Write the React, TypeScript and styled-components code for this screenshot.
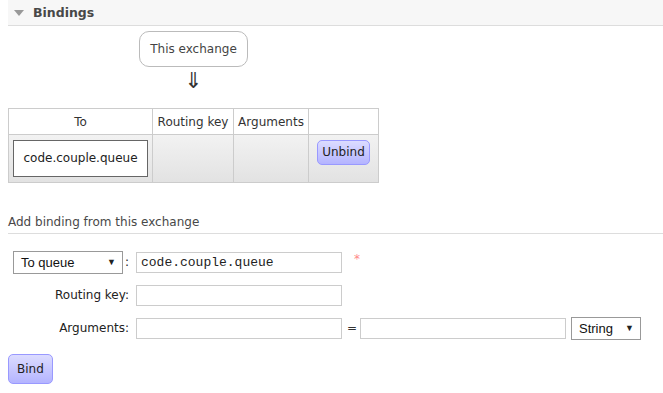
import React from "react";
import styled, { createGlobalStyle } from "styled-components";

const GlobalStyle = createGlobalStyle`
  body {
    margin: 0;
    background: #fff;
    font-family: "DejaVu Sans", Verdana, sans-serif;
    font-size: 12px;
    color: #333;
  }
`;

const Page = styled.div`
  padding: 0 0 0 8px;
`;

const SectionHeader = styled.h2`
  display: flex;
  align-items: center;
  gap: 9px;
  height: 25px;
  margin: 0;
  padding: 0 0 0 6px;
  background: #f7f7f7;
  border-bottom: 1px solid #ddd;
  font-size: 12.5px;
  font-weight: bold;
  color: #484848;
`;

const Triangle = styled.span`
  width: 0;
  height: 0;
  border-left: 5px solid transparent;
  border-right: 5px solid transparent;
  border-top: 6px solid #999;
  margin-top: 1px;
`;

const Body = styled.div`
  padding-top: 5px;
`;

const BindingsWrapper = styled.div`
  display: inline-block;
  text-align: center;
`;

const ExchangeBox = styled.div`
  display: inline-block;
  padding: 10px 10px;
  border: 1px solid #bbb;
  border-radius: 10px;
  color: #444;
  line-height: 14px;
`;

const Arrow = styled.div`
  font-size: 22px;
  line-height: 22px;
  margin: 3px 0 16px;
  color: #333;
`;

const Table = styled.table`
  border-collapse: collapse;
  border: 1px solid #ccc;
`;

const Th = styled.th<{ $w: number }>`
  width: ${(p) => p.$w}px;
  box-sizing: border-box;
  height: 26px;
  padding: 0 4px;
  border: 1px solid #ccc;
  font-weight: normal;
  color: #333;
  background: #fff;
`;

const Row = styled.tr`
  background: linear-gradient(#f2f2f2, #e2e2e2);
`;

const Td = styled.td`
  height: 48px;
  padding: 5px 4px;
  box-sizing: border-box;
  border: 1px solid #ccc;
  vertical-align: top;
  text-align: center;
`;

const QueueBox = styled.div`
  display: block;
  padding: 11px 9px;
  border: 1px solid #666;
  background: #fff;
  line-height: 13px;
  color: #222;
  white-space: nowrap;
`;

const Button = styled.button<{ $big?: boolean }>`
  font-family: "DejaVu Sans", Verdana, sans-serif;
  font-size: 12px;
  color: #222;
  border: 1px solid #99f;
  border-radius: 5px;
  background: linear-gradient(#dcdcff, #b4b4ff);
  padding: ${(p) => (p.$big ? "7px 8px" : "5px 4px")};
  line-height: ${(p) => (p.$big ? "14px" : "13px")};
  cursor: pointer;
`;

const SubHeader = styled.h3`
  margin: 32px 0 0;
  padding-bottom: 4px;
  border-bottom: 1px solid #ddd;
  font-size: 12px;
  font-weight: normal;
  color: #484848;
`;

const Form = styled.div`
  display: flex;
  flex-direction: column;
  gap: 11px;
  padding: 17px 0 0 5px;
`;

const FormRow = styled.div`
  display: flex;
  align-items: center;
  gap: 5px;
  height: 22px;
`;

const Label = styled.div`
  width: 116px;
  flex-shrink: 0;
  margin-right: 2px;
  display: flex;
  justify-content: flex-end;
  align-items: center;
  gap: 2px;
  color: #222;
`;

const Input = styled.input<{ $mono?: boolean }>`
  width: 206px;
  height: 21px;
  flex-shrink: 0;
  box-sizing: border-box;
  border: 1px solid #ccc;
  padding: 0 4px;
  font-family: ${(p) => (p.$mono ? '"Liberation Mono", monospace' : '"DejaVu Sans", sans-serif')};
  font-size: 13px;
  color: #222;
  outline: none;
`;

const SelectBox = styled.div<{ $w: number }>`
  width: ${(p) => p.$w}px;
  height: 23px;
  flex-shrink: 0;
  box-sizing: border-box;
  border: 1px solid #999;
  background: #fff;
  display: flex;
  align-items: center;
  justify-content: space-between;
  padding: 0 6px 0 7px;
  font-family: "Liberation Sans", Arial, sans-serif;
  font-size: 13px;
  color: #111;
`;

const Caret = styled.span`
  font-size: 9px;
  color: #222;
`;

const Required = styled.span`
  color: #f88;
  font-size: 12px;
  margin: -6px 0 0 7px;
`;

const Eq = styled.span`
  width: 8px;
  text-align: center;
  color: #333;
`;

const BindRow = styled.div`
  padding-top: 4px;
  margin-left: -5px;
`;

export default function App() {
  return (
    <Page>
      <GlobalStyle />
      <SectionHeader>
        <Triangle />
        Bindings
      </SectionHeader>
      <Body>
        <BindingsWrapper>
          <ExchangeBox>This exchange</ExchangeBox>
          <Arrow>⇓</Arrow>
          <Table>
            <thead>
              <tr>
                <Th $w={144}>To</Th>
                <Th $w={81}>Routing key</Th>
                <Th $w={75}>Arguments</Th>
                <Th $w={70}></Th>
              </tr>
            </thead>
            <tbody>
              <Row>
                <Td>
                  <QueueBox>code.couple.queue</QueueBox>
                </Td>
                <Td></Td>
                <Td></Td>
                <Td>
                  <Button>Unbind</Button>
                </Td>
              </Row>
            </tbody>
          </Table>
        </BindingsWrapper>
        <SubHeader>Add binding from this exchange</SubHeader>
        <Form>
          <FormRow>
            <Label>
              <SelectBox $w={110}>
                To queue <Caret>▼</Caret>
              </SelectBox>
              :
            </Label>
            <Input $mono defaultValue="code.couple.queue" />
            <Required>*</Required>
          </FormRow>
          <FormRow>
            <Label>Routing key:</Label>
            <Input />
          </FormRow>
          <FormRow>
            <Label>Arguments:</Label>
            <Input />
            <Eq>=</Eq>
            <Input />
            <SelectBox $w={70}>
              String <Caret>▼</Caret>
            </SelectBox>
          </FormRow>
          <BindRow>
            <Button $big>Bind</Button>
          </BindRow>
        </Form>
      </Body>
    </Page>
  );
}
